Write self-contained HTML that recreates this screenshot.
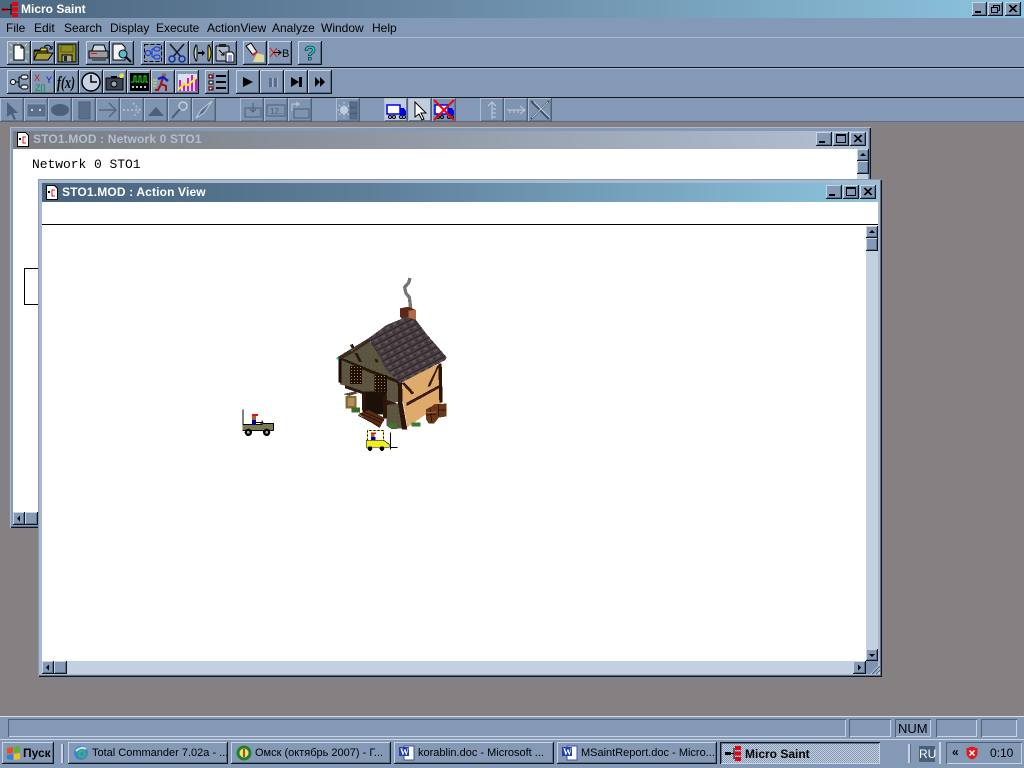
<!DOCTYPE html>
<html><head><meta charset="utf-8"><title>Micro Saint</title>
<style>
html,body{margin:0;padding:0;width:1024px;height:768px;overflow:hidden;background:#858183}
body{position:relative;font-family:"Liberation Sans","Noto Sans CJK SC",sans-serif;font-size:12px;color:#000}
div,span,svg.a{position:absolute;box-sizing:border-box}
.t{white-space:nowrap}
.b{width:24px;height:24px;background:#8499b5;box-shadow:inset -1px -1px 0 #10141c,inset 1px 1px 0 #c8d4e4,inset -2px -2px 0 #5b6f8b}
.d{width:24px;height:24px;top:98px;background:#7f94b0;box-shadow:inset -1px -1px 0 #4f627c,inset 1px 1px 0 #aebdd0,inset -2px -2px 0 #667a96}
.b svg,.d svg{position:absolute;left:0;top:0}
.c{height:14px;background:#8499b5;box-shadow:inset -1px -1px 0 #10141c,inset 1px 1px 0 #c8d4e4,inset -2px -2px 0 #5b6f8b}
.c svg{position:absolute;left:0;top:0}
.s{background:#8499b5;box-shadow:inset -1px -1px 0 #10141c,inset 1px 1px 0 #c8d4e4,inset -2px -2px 0 #5b6f8b}
.s svg{position:absolute;left:0;top:0}
.m{top:21px;font-size:12px;color:#000}
.p{top:719px;height:18px;box-shadow:inset 1px 1px 0 #4f627c,inset -1px -1px 0 #c8d4e4}
.k{top:742px;height:22px;width:160px;background:#8499b5;box-shadow:inset -1px -1px 0 #10141c,inset 1px 1px 0 #c8d4e4,inset -2px -2px 0 #5b6f8b}
.k b,.k i{font-style:normal;font-weight:normal;position:absolute;left:24px;top:4px;white-space:nowrap;font-size:11px;line-height:14px}
.k svg{position:absolute;left:5px;top:3px}
</style></head><body>

<!-- app title bar -->
<div style="left:0;top:0;width:1024px;height:18px;background:linear-gradient(90deg,#4c6780 0%,#6a8aa6 45%,#8cc4de 100%)"></div>
<svg class="a" style="left:2px;top:1px" width="16" height="16" viewBox="0 0 16 16"><rect x="0" y="7" width="6" height="3" fill="#e8000c"/><rect x="0" y="8" width="6" height="1" fill="#000"/><path d="M6 8.500h3M9 3v11" stroke="#000"/><rect x="10" y="1" width="6" height="4" fill="#e8000c"/><rect x="10" y="6.500" width="6" height="4" fill="#e8000c"/><rect x="10" y="12" width="6" height="4" fill="#e8000c"/></svg>
<div class="t" style="left:21px;top:2px;color:#fff;font-weight:bold;font-size:12px">Micro Saint</div>
<div class="c" style="left:972px;top:2px;width:15px"><svg width="15" height="14"><rect x="3" y="9" width="6" height="2" fill="#000"/></svg></div>
<div class="c" style="left:988px;top:2px;width:15px"><svg width="15" height="14"><path d="M5.500 3.500h6v5h-2M5.500 3.500v2" fill="none" stroke="#000"/><rect x="3.500" y="5.500" width="6" height="5" fill="none" stroke="#000"/><path d="M3 5.500h7M5 3.500h7" stroke="#000"/></svg></div>
<div class="c" style="left:1005px;top:2px;width:16px"><svg width="16" height="14"><path d="M4 3l7 7M5 3l7 7M11 3l-7 7M12 3l-7 7" stroke="#000"/></svg></div>

<!-- menu -->
<div style="left:0;top:18px;width:1024px;height:104px;background:#8499b5"></div>
<div class="m t" style="left:6px">File</div>
<div class="m t" style="left:34px">Edit</div>
<div class="m t" style="left:64px">Search</div>
<div class="m t" style="left:110px">Display</div>
<div class="m t" style="left:156px">Execute</div>
<div class="m t" style="left:207px">ActionView</div>
<div class="m t" style="left:272px">Analyze</div>
<div class="m t" style="left:321px">Window</div>
<div class="m t" style="left:372px">Help</div>

<div style="left:0;top:37px;width:1024px;height:1px;background:#a9b9ce"></div>
<div style="left:0;top:67px;width:1024px;height:1px;background:#10141c"></div>
<div style="left:0;top:68px;width:1024px;height:1px;background:#a9b9ce"></div>
<div style="left:0;top:97px;width:1024px;height:1px;background:#10141c"></div>
<div style="left:0;top:121px;width:1024px;height:1px;background:#5b6f8b"></div>

<!-- toolbar 1 -->
<div class="b" style="left:7px;top:41px"><svg width="24" height="24"><path d="M7 4h7l3 3v12H7z" fill="#fff" stroke="#000"/><path d="M14 4v3h3" fill="none" stroke="#000"/><path d="M3 3l2 2M20 3l-2 2M3 20l2-2M20 21l-2-2M2 11h3M19 11h3M11 1v2" stroke="#f4e83c"/></svg></div>
<div class="b" style="left:31px;top:41px"><svg width="24" height="24"><path d="M3 9h6l1-2h6v3" fill="#e8d448" stroke="#000"/><path d="M3 19V10h14l-1 9z" fill="#8c8428" stroke="#000"/><path d="M3 19l3-7h16l-5 7z" fill="#a89c38" stroke="#000"/><path d="M13 6q3-3 6-1l1 2M21 5v3h-3" fill="none" stroke="#000"/></svg></div>
<div class="b" style="left:55px;top:41px"><svg width="24" height="24"><rect x="3" y="3" width="18" height="18" fill="#8c8a24" stroke="#000"/><rect x="6" y="4" width="12" height="7" fill="#8c8a24" stroke="#5c5a14"/><rect x="7" y="14" width="10" height="7" fill="#a8a890" stroke="#000"/><rect x="9" y="15" width="3" height="5" fill="#222"/></svg></div>
<div class="b" style="left:86px;top:41px"><svg width="24" height="24"><path d="M8 4h10l2 6H6z" fill="#d0d8e0" stroke="#000"/><rect x="3" y="10" width="19" height="7" fill="#9a9aa2" stroke="#000"/><rect x="5" y="12" width="6" height="1" fill="#e81010"/><rect x="6" y="17" width="14" height="3" fill="#555"/></svg></div>
<div class="b" style="left:110px;top:41px"><svg width="24" height="24"><path d="M3 3h9l3 3v13H3z" fill="#f2f4f8" stroke="#000"/><circle cx="13" cy="13" r="4" fill="#5cb8d0" stroke="#000"/><path d="M16 16l5 5" stroke="#000" stroke-width="2"/></svg></div>
<div class="b" style="left:141px;top:41px"><svg width="24" height="24"><rect x="3.500" y="3.500" width="17" height="17" fill="none" stroke="#000" stroke-dasharray="4 2"/><circle cx="7" cy="12" r="2.500" fill="none" stroke="#1030e0"/><rect x="13" y="6" width="6" height="4" rx="2" fill="none" stroke="#1030e0"/><rect x="13" y="14" width="6" height="4" rx="2" fill="none" stroke="#1030e0"/><path d="M9 12h2M11 8v8M11 8h2M11 16h2" stroke="#1030e0"/></svg></div>
<div class="b" style="left:165px;top:41px"><svg width="24" height="24"><path d="M5 3l11 13M19 3L8 16" stroke="#10182c" stroke-width="1.500"/><circle cx="7" cy="18" r="3" fill="none" stroke="#1030a0" stroke-width="1.500"/><circle cx="17" cy="18" r="3" fill="none" stroke="#1030a0" stroke-width="1.500"/></svg></div>
<div class="b" style="left:189px;top:41px"><svg width="24" height="24"><path d="M7 4q-4 8 0 16l1-1V5z" fill="#d8d8c0" stroke="#000"/><path d="M20 4q4 8 0 16l-1-1V5z" fill="#e8d040" stroke="#000"/><path d="M9 12h5" stroke="#000" stroke-width="2"/><path d="M13 9l3 3-3 3z"/></svg></div>
<div class="b" style="left:213px;top:41px"><svg width="24" height="24"><rect x="3" y="5" width="13" height="15" rx="1" fill="#aab6c6" stroke="#000"/><rect x="6" y="3" width="7" height="3" fill="#222"/><path d="M6 9l5 5M11 11v3H8" stroke="#000" fill="none"/><path d="M13 11h6l2 2v8h-8z" fill="#fff" stroke="#000"/><path d="M15 15h4M15 17h4M15 19h4" stroke="#1030e0"/></svg></div>
<div class="b" style="left:243px;top:41px"><svg width="24" height="24"><path d="M3 5l5-3 6 9-4 3z" fill="#e8e8e8" stroke="#000"/><path d="M9 13l5-3 1 2-5 3z" fill="#d82020"/><path d="M14 12l7 2v7H10z" fill="#e8e090" opacity=".9"/></svg></div>
<div class="b" style="left:268px;top:41px"><svg width="24" height="24"><path d="M2 7l7 9M9 7l-7 9" stroke="#e81010"/><path d="M5 11.500h7" stroke="#000"/><path d="M10 9l3 2.500-3 2.500" fill="none" stroke="#000"/><text x="14" y="16" font-family="Liberation Sans" font-size="11" fill="#000">B</text></svg></div>
<div class="b" style="left:298px;top:41px"><svg width="24" height="24"><text x="6" y="19" font-family="Liberation Sans" font-weight="bold" font-size="20" fill="#20c8c8" stroke="#000" stroke-width=".5">?</text></svg></div>

<!-- toolbar 2 -->
<div class="b" style="left:7px;top:70px"><svg width="24" height="24"><circle cx="6" cy="12" r="2.500" fill="#e8ecf2" stroke="#000"/><rect x="14" y="5" width="7" height="4" rx="2" fill="#e8ecf2" stroke="#000"/><rect x="14" y="15" width="7" height="4" rx="2" fill="#e8ecf2" stroke="#000"/><path d="M9 12h3M12 7v10M12 7h2M12 17h2" stroke="#000"/></svg></div>
<div class="b" style="left:31px;top:70px"><svg width="24" height="24"><text x="3" y="11" font-family="Liberation Sans" font-size="9" fill="#e01010">X</text><text x="15" y="13" font-family="Liberation Sans" font-size="9" fill="#1010d0">Y</text><text x="4" y="21" font-family="Liberation Sans" font-size="9" fill="#109040">Z[]</text></svg></div>
<div class="b" style="left:55px;top:70px"><svg width="24" height="24"><text x="2" y="18" font-family="Liberation Serif" font-style="italic" font-weight="bold" font-size="17" textLength="18" lengthAdjust="spacingAndGlyphs" fill="#000">f(x)</text></svg></div>
<div class="b" style="left:79px;top:70px"><svg width="24" height="24"><circle cx="12" cy="12" r="9" fill="#c8d4e4" stroke="#000" stroke-width="1.500"/><path d="M12 5v7h6" fill="none" stroke="#000" stroke-width="1.500"/></svg></div>
<div class="b" style="left:103px;top:70px"><svg width="24" height="24"><rect x="3" y="8" width="17" height="12" fill="#3c4450" stroke="#000"/><rect x="8" y="6" width="6" height="2" fill="#000"/><circle cx="11" cy="14" r="3" fill="#9aa6b8" stroke="#000"/><path d="M16 5l3-2 2 2-1 3h-3z" fill="#f0e040"/></svg></div>
<div class="b" style="left:127px;top:70px"><svg width="24" height="24"><rect x="3" y="3" width="19" height="18" fill="#000"/><path d="M4 12h3V6h2v6h3V6h2v6h3V6h2v6h2" fill="none" stroke="#20e020"/><path d="M5 17h2M9 17h2M13 17h2M17 17h2" stroke="#c0c0c0" stroke-width="2"/></svg></div>
<div class="b" style="left:151px;top:70px"><svg width="24" height="24"><circle cx="13" cy="5" r="2" fill="#a06040"/><path d="M12 7l-2 7 5 2v5M10 14l-3 6-3 0" fill="none" stroke="#a01010" stroke-width="2"/><path d="M7 9l5-2 5 4" fill="none" stroke="#1020d0" stroke-width="2.500"/><path d="M2 10h4M2 13h4M2 16h3" stroke="#e8e040"/></svg></div>
<div class="b" style="left:175px;top:70px"><svg width="24" height="24"><rect x="3" y="4" width="19" height="17" fill="#d8e0ea"/><path d="M5 10v11M9 13v8M13 8v13M17 5v16M21 9v12" stroke="#e010c0" stroke-width="2"/><path d="M3 20l6-6 4 1 8-7" fill="none" stroke="#f0f020" stroke-width="2"/></svg></div>
<div class="b" style="left:205px;top:70px"><svg width="24" height="24"><rect x="4" y="5" width="4" height="3" fill="#fff" stroke="#000"/><rect x="4" y="11" width="4" height="3" fill="#fff" stroke="#000"/><rect x="4" y="17" width="4" height="3" fill="#fff" stroke="#000"/><path d="M3 6l3 2 3-5M3 18l3 2 3-5" fill="none" stroke="#e81010"/><rect x="11" y="5" width="10" height="2" /><rect x="11" y="11" width="10" height="2"/><rect x="11" y="17" width="10" height="2"/></svg></div>
<div class="b" style="left:236px;top:70px"><svg width="24" height="24"><path d="M7 7l10 5-10 5z"/></svg></div>
<div class="b" style="left:260px;top:70px"><svg width="24" height="24"><rect x="9" y="8" width="3" height="9" fill="#5b6f8b"/><rect x="14" y="8" width="3" height="9" fill="#5b6f8b"/><path d="M12.500 8v9M17.500 8v9" stroke="#a8b8cc"/></svg></div>
<div class="b" style="left:284px;top:70px"><svg width="24" height="24"><path d="M7 7l8 5-8 5z"/><rect x="15" y="7" width="3" height="10"/></svg></div>
<div class="b" style="left:308px;top:70px"><svg width="24" height="24"><path d="M7 7l5 5-5 5z"/><path d="M12 7l5 5-5 5z"/></svg></div>

<!-- toolbar 3 -->
<div class="d" style="left:0"><svg width="24" height="24"><path d="M7 4v15l4-3 3 6 2-1-3-6h5z" fill="#4c607c"/></svg></div>
<div class="d" style="left:24px"><svg width="24" height="24"><rect x="3" y="6" width="19" height="13" fill="#5b6f8b" stroke="#a8b8cc" stroke-opacity=".5"/><rect x="7" y="11" width="2" height="2" fill="#c8d4e4"/><rect x="15" y="11" width="2" height="2" fill="#c8d4e4"/></svg></div>
<div class="d" style="left:48px"><svg width="24" height="24"><ellipse cx="12" cy="12" rx="9" ry="6" fill="#4c607c"/></svg></div>
<div class="d" style="left:72px"><svg width="24" height="24"><rect x="7" y="4" width="11" height="17" fill="#5b6f8b" stroke="#4c607c"/></svg></div>
<div class="d" style="left:96px"><svg width="24" height="24"><path d="M3 12h17M13 5l7 7-7 7" fill="none" stroke="#55687f" stroke-width="1.500"/></svg></div>
<div class="d" style="left:120px"><svg width="24" height="24"><path d="M3 12h17M13 5l7 7-7 7" fill="none" stroke="#a8b8cc" stroke-dasharray="2 2" stroke-width="2"/></svg></div>
<div class="d" style="left:144px"><svg width="24" height="24"><path d="M4 18l8-9 8 9z" fill="#4c607c"/></svg></div>
<div class="d" style="left:168px"><svg width="24" height="24"><circle cx="15" cy="8" r="4" fill="none" stroke="#c0cddd" stroke-width="1.500"/><path d="M12 11l-8 9" stroke="#4c607c" stroke-width="2"/></svg></div>
<div class="d" style="left:192px"><svg width="24" height="24"><path d="M20 3L9 12l-5 8 8-5z" fill="#5b6f8b" stroke="#c0cddd"/></svg></div>
<div class="d" style="left:240px"><svg width="24" height="24"><rect x="5" y="10" width="16" height="9" fill="none" stroke="#4c607c"/><path d="M13 5v8M10 11l3 3 3-3" fill="none" stroke="#4c607c"/></svg></div>
<div class="d" style="left:264px"><svg width="24" height="24"><rect x="3" y="7" width="18" height="11" fill="none" stroke="#4c607c"/><text x="6" y="16" font-family="Liberation Sans" font-size="8" fill="#4c607c">12..</text></svg></div>
<div class="d" style="left:288px"><svg width="24" height="24"><rect x="6" y="11" width="15" height="9" fill="none" stroke="#4c607c"/><path d="M4 13V6h6M8 4l3 2-3 2" fill="none" stroke="#c0cddd"/></svg></div>
<div class="d" style="left:336px"><svg width="24" height="24"><circle cx="8" cy="12" r="4" fill="#c0cddd"/><path d="M8 4v16M1 12h13M3 7l10 10M13 7L3 17" stroke="#c0cddd" stroke-dasharray="2 1"/><rect x="14" y="4" width="7" height="5" fill="#5b6f8b" stroke="#4c607c"/><rect x="14" y="10" width="7" height="5" fill="#5b6f8b" stroke="#4c607c"/><rect x="14" y="16" width="7" height="5" fill="#5b6f8b" stroke="#4c607c"/></svg></div>
<div class="d" style="left:384px;background:#c0cddd"><svg width="24" height="24"><rect x="3" y="7" width="13" height="9" fill="#fff" stroke="#0000f0" stroke-width="1.500"/><path d="M16 10h4l2 3v4h-6z" fill="#0000f0"/><circle cx="6" cy="19" r="1.500" fill="none" stroke="#000"/><circle cx="10" cy="19" r="1.500" fill="none" stroke="#000"/><circle cx="17" cy="19" r="1.500" fill="none" stroke="#000"/><circle cx="20" cy="19" r="1.500" fill="none" stroke="#000"/></svg></div>
<div class="d" style="left:408px;background:#c0cddd"><svg width="24" height="24"><path d="M7 4v15l4-3 3 6 2-1-3-6h5z" fill="#fff" stroke="#000"/></svg></div>
<div class="d" style="left:432px"><svg width="24" height="24"><rect x="3" y="7" width="13" height="9" fill="#fff" stroke="#0000f0" stroke-width="1.500"/><path d="M16 10h4l2 3v4h-6z" fill="#0000f0"/><circle cx="6" cy="19" r="1.500" fill="none" stroke="#000"/><circle cx="10" cy="19" r="1.500" fill="none" stroke="#000"/><circle cx="17" cy="19" r="1.500" fill="none" stroke="#000"/><circle cx="20" cy="19" r="1.500" fill="none" stroke="#000"/><path d="M2 2l20 20M22 2L2 22" stroke="#f00010" stroke-width="2"/></svg></div>
<div class="d" style="left:480px"><svg width="24" height="24"><path d="M12 4v17M8 8l4-4 4 4M12 11h4M12 15h4M12 19h4" fill="none" stroke="#c0cddd"/></svg></div>
<div class="d" style="left:504px"><svg width="24" height="24"><path d="M3 12h18M16 8l5 4-5 4M6 12v3M10 12v3M14 12v3" fill="none" stroke="#c0cddd"/></svg></div>
<div class="d" style="left:528px"><svg width="24" height="24"><path d="M3 3l18 18M21 3L3 21" stroke="#3c4e66" stroke-width="2"/><path d="M6 4l16 16M4 20L20 4" stroke="#c0cddd"/></svg></div>

<!-- MDI area -->
<div style="left:0;top:122px;width:1024px;height:594px;background:#858183"></div>

<!-- window 1 -->
<div style="left:10px;top:127px;width:861px;height:401px;background:#8499b5;box-shadow:inset 1px 1px 0 #a9b9ce,inset -1px -1px 0 #10141c,inset -2px -2px 0 #5b6f8b"></div>
<div style="left:13px;top:131px;width:855px;height:18px;background:linear-gradient(90deg,#7a7c80 0%,#8d95a0 40%,#b2c0d4 100%)"></div>
<svg class="a" style="left:17px;top:132px" width="12" height="15"><path d="M.5.5h8l3 3v11H.5z" fill="#fff" stroke="#000"/><rect x="2" y="6" width="2" height="2"/><path d="M9 5H6v6h3" fill="none" stroke="#e01010"/></svg>
<div class="t" style="left:33px;top:132px;font-weight:bold;color:#b2bfd0;font-size:12px;letter-spacing:.15px">STO1.MOD : Network 0 STO1</div>
<div class="c" style="left:816px;top:132px;width:16px"><svg width="16" height="14"><rect x="3" y="9" width="6" height="2" fill="#000"/></svg></div>
<div class="c" style="left:833px;top:132px;width:16px"><svg width="16" height="14"><rect x="3.500" y="2.500" width="9" height="8" fill="none" stroke="#000"/><path d="M3 3.500h10" stroke="#000"/></svg></div>
<div class="c" style="left:850px;top:132px;width:16px"><svg width="16" height="14"><path d="M4 3l7 7M5 3l7 7M11 3l-7 7M12 3l-7 7" stroke="#000"/></svg></div>
<div style="left:13px;top:149px;width:844px;height:363px;background:#fff"></div>
<div class="t" style="left:32px;top:157px;font-family:'Liberation Mono',monospace;font-size:13px;letter-spacing:-.05px">Network 0 STO1</div>
<div style="left:857px;top:149px;width:11px;height:363px;background:#c3d0e0"></div>
<div class="s" style="left:857px;top:149px;width:12px;height:12px"><svg width="12" height="12"><path d="M6 4l3 3H3z"/></svg></div>
<div class="s" style="left:857px;top:161px;width:12px;height:13px"></div>
<div style="left:24px;top:268px;width:15px;height:37px;border:1px solid #000;background:#fff"></div>
<div style="left:13px;top:512px;width:855px;height:13px;background:#c3d0e0"></div>
<div class="s" style="left:13px;top:512px;width:12px;height:13px"><svg width="12" height="13"><path d="M4 6.500l3-3v6z"/></svg></div>
<div class="s" style="left:25px;top:512px;width:13px;height:13px"></div>

<!-- window 2 -->
<div style="left:38px;top:179px;width:844px;height:498px;background:#a9b9ce;box-shadow:inset 1px 1px 0 #8499b5,inset -1px -1px 0 #10141c,inset -2px -2px 0 #5b6f8b"></div>
<div style="left:42px;top:183px;width:836px;height:19px;background:linear-gradient(90deg,#47627c 0%,#5f7f9b 40%,#8cc4de 100%)"></div>
<svg class="a" style="left:46px;top:185px" width="12" height="15"><path d="M.5.5h8l3 3v11H.5z" fill="#fff" stroke="#000"/><rect x="2" y="6" width="2" height="2"/><path d="M9 5H6v6h3" fill="none" stroke="#e01010"/></svg>
<div class="t" style="left:62px;top:185px;font-weight:bold;color:#fff;font-size:12px;letter-spacing:.15px">STO1.MOD : Action View</div>
<div class="c" style="left:826px;top:185px;width:16px"><svg width="16" height="14"><rect x="3" y="9" width="6" height="2" fill="#000"/></svg></div>
<div class="c" style="left:843px;top:185px;width:16px"><svg width="16" height="14"><rect x="3.500" y="2.500" width="9" height="8" fill="none" stroke="#000"/><path d="M3 3.500h10" stroke="#000"/></svg></div>
<div class="c" style="left:860px;top:185px;width:16px"><svg width="16" height="14"><path d="M4 3l7 7M5 3l7 7M11 3l-7 7M12 3l-7 7" stroke="#000"/></svg></div>
<div style="left:42px;top:202px;width:836px;height:459px;background:#fff"></div>
<div style="left:42px;top:224px;width:836px;height:1px;background:#000"></div>
<div style="left:866px;top:226px;width:12px;height:423px;background:#c3d0e0"></div>
<div class="s" style="left:866px;top:226px;width:12px;height:12px"><svg width="12" height="12"><path d="M6 4l3 3H3z"/></svg></div>
<div class="s" style="left:866px;top:238px;width:12px;height:13px"></div>
<div class="s" style="left:866px;top:649px;width:12px;height:12px"><svg width="12" height="12"><path d="M6 8l3-3H3z"/></svg></div>
<div style="left:42px;top:661px;width:824px;height:13px;background:#c3d0e0"></div>
<div class="s" style="left:42px;top:661px;width:12px;height:13px"><svg width="12" height="13"><path d="M4 6.500l3-3v6z"/></svg></div>
<div class="s" style="left:54px;top:661px;width:13px;height:13px"></div>
<div class="s" style="left:853px;top:661px;width:13px;height:13px"><svg width="13" height="13"><path d="M8 6.500l-3-3v6z"/></svg></div>
<div style="left:866px;top:661px;width:12px;height:13px;background:#7f94b0"></div>
<svg class="a" style="left:870px;top:664px" width="11" height="11"><path d="M1 10l9-9M5 10l5-5M8 10l2-2" stroke="#d4dde8"/><path d="M2 10l8-8M6 10l4-4" stroke="#4f627c"/></svg>

<!-- Scene: coordinates are 3x, origin 230,270 -->
<svg class="a" style="left:230px;top:270px" width="230" height="190" viewBox="0 0 690 570" shape-rendering="crispEdges">
<defs>
<pattern id="lat" width="9" height="9" patternUnits="userSpaceOnUse"><rect width="9" height="9" fill="#1c1008"/><rect x="3" y="3" width="3" height="3" fill="#c07c24"/></pattern>
<pattern id="roof" width="24" height="18" patternUnits="userSpaceOnUse" patternTransform="rotate(-27)"><rect width="24" height="18" fill="#4a3f42"/><rect width="24" height="3" fill="#2a2224"/><rect x="3" y="6" width="9" height="6" fill="#625658"/><rect x="15" y="9" width="6" height="6" fill="#3c3234"/></pattern>
<pattern id="wall" width="12" height="12" patternUnits="userSpaceOnUse"><rect width="12" height="12" fill="#5c5640"/><rect x="3" y="3" width="3" height="3" fill="#625c44"/><rect x="9" y="9" width="3" height="3" fill="#54503a"/></pattern>
</defs>
<!-- smoke -->
<path d="M540 24l-4 14-12 14 4 18 10 12 4 32" fill="none" stroke="#767676" stroke-width="10"/>
<!-- chimney -->
<path d="M510 115l25-5 22 10 1 42-23 8-25-30z" fill="#5a2818"/>
<path d="M535 122l23-3 1 42-23 5z" fill="#b06a48"/>
<!-- left wall -->
<path d="M330 268l70-43 30-8 75 113v65l-35 8-70-35-50-20-20-5z" fill="url(#wall)"/>
<path d="M326 265h8v74l-8-2z" fill="#1e0c06"/>
<path d="M332 262l90 37 80 30v10l-85-32-85-38zM360 225l8-3 28 53-8 2zM423 218l8-2 14 60-8 2z" fill="#2a1a0c"/>
<!-- windows -->
<rect x="360" y="288" width="36" height="54" fill="url(#lat)"/>
<rect x="433" y="315" width="38" height="54" fill="url(#lat)"/>
<!-- under / door -->
<path d="M345 345l155 55v12l-32-4-68-35-55-18z" fill="#2c1a10"/>
<rect x="398" y="365" width="72" height="68" fill="#1c100a"/>
<path d="M470 405l46-6 14 76-46 2-14-10z" fill="url(#wall)"/>
<path d="M396 365h10v55h-10zM459 375h12v70h-12z" fill="#2c1608"/>
<!-- sign -->
<path d="M340 372l36-8 6 6-24 8z" fill="#5a4830"/>
<rect x="346" y="378" width="34" height="38" fill="#8a6830"/><rect x="354" y="384" width="20" height="24" fill="#b09060"/>
<path d="M365 412h25v15h-25z" fill="#3a6a2c"/>
<!-- porch -->
<path d="M385 432l30-12 50 24-16 30z" fill="#5a2c14"/><path d="M392 430l62 28M402 426l60 26M385 436l62 32" stroke="#2c1408" stroke-width="3"/>
<!-- right wall -->
<path d="M505 335l125-55 5 120-103 72-12-72z" fill="#dfab6c"/>
<path d="M503 330h13l2 70 14 78h-16l-12-78z" fill="#2c1408"/>
<path d="M515 340l8-3 30 32-8 4zM530 398l102-55v9l-102 56zM592 350l30-62 8-6-30 68z" fill="#3a1c0c"/>
<path d="M625 280h10l3 118h-10z" fill="#2a140a"/>
<!-- roof -->
<path d="M415 205l55-40 60-25 28 10 30 40 62 72-4 8-136 70-40-40z" fill="url(#roof)"/>
<path d="M320 263l95-58 4 8-92 56z" fill="#3a2c22"/>
<path d="M330 262l85-55 42 66-80-25z" fill="url(#wall)"/>
<path d="M330 262l30-20 6 4 14-15 36-24 4 8-40 26-6 5-37 20z" fill="#3a2c22"/>
<rect x="320" y="263" width="6" height="6" fill="#30c0d0"/>
<!-- barrels -->
<path d="M588 418l16-8 10-8 36-1v38l-24 4-14 18h-16l-8-14z" fill="#6a3818"/><path d="M600 412l6 48M625 404v36M588 435l30-2M625 420h25" stroke="#2c1408" stroke-width="3"/><path d="M590 428l30-2" stroke="#a06030" stroke-width="3"/>
<!-- grass -->
<path d="M475 460h26v12h-26zM545 458h27v12h-27z" fill="#3a7a2c"/>

<!-- jeep -->
<path d="M37 418h3v62h-3z" fill="#000"/>
<path d="M38 463h59l3-3h30v20l-9 3H46l-9-3z" fill="#7a7a50"/>
<path d="M37 463h60M100 460h30v21M37 481h93" fill="none" stroke="#000" stroke-width="3"/>
<rect x="66" y="432" width="18" height="6" fill="#e01010"/>
<rect x="66" y="438" width="12" height="12" fill="#a06030"/>
<rect x="66" y="450" width="12" height="15" fill="#0000a0"/>
<path d="M78 458h18l-4 3M96 452l3 10" stroke="#000" stroke-width="3" fill="none"/>
<circle cx="55" cy="487" r="11" fill="#000"/><circle cx="55" cy="487" r="4" fill="#bbb"/>
<circle cx="110" cy="487" r="11" fill="#000"/><circle cx="110" cy="487" r="4" fill="#bbb"/>

<!-- forklift -->
<rect x="412" y="481" width="48" height="30" fill="none" stroke="#000" stroke-width="3"/>
<rect x="412" y="481" width="48" height="30" fill="none" stroke="#f0e000" stroke-width="3" stroke-dasharray="6 6"/>
<rect x="423" y="487" width="15" height="5" fill="#e01010"/>
<rect x="423" y="492" width="11" height="9" fill="#a06030"/>
<rect x="423" y="501" width="13" height="14" fill="#0000c0"/>
<path d="M409 511h52l17 12v9H409z" fill="#f0f020" stroke="#000" stroke-width="2"/>
<circle cx="420" cy="536" r="7" fill="#000"/><circle cx="456" cy="536" r="7" fill="#000"/>
<path d="M480 488h3v50h-3zM480 531h23v3h-23z" fill="#000"/>
</svg>

<!-- status bar -->
<div style="left:0;top:716px;width:1024px;height:52px;background:#8499b5"></div>
<div style="left:0;top:716px;width:1024px;height:1px;background:#d4dde8"></div>
<div class="p" style="left:8px;width:838px"></div>
<div class="p" style="left:849px;width:42px"></div>
<div class="p" style="left:895px;width:36px"></div>
<div class="t" style="left:898px;top:721px;font-size:13px">NUM</div>
<div class="p" style="left:936px;width:41px"></div>
<div class="p" style="left:981px;width:36px"></div>
<div style="left:0;top:739px;width:1024px;height:1px;background:#c8d4e4"></div>

<!-- taskbar -->
<div class="k" style="left:2px;width:52px"><svg width="18" height="16" style="left:3px"><path d="M2 3l6-1v6l-6 1z" fill="#e85020"/><path d="M9 2l6-1v6l-6 1z" fill="#60b030"/><path d="M2 10l6-1v6l-6-1z" fill="#3080e0"/><path d="M9 9l6-1v6l-6 1z" fill="#f0c020"/></svg><b style="left:21px;font-size:12px;font-weight:bold;color:#000">Пуск</b></div>
<div style="left:61px;top:744px;width:2px;height:19px;background:#c8d4e4;box-shadow:1px 0 0 #5b6f8b"></div>
<div class="k" style="left:68px"><svg width="16" height="16"><circle cx="8" cy="8" r="7" fill="#3a88d0"/><path d="M3 6q5-5 10-2" stroke="#c0e8f0" stroke-width="2" fill="none"/><circle cx="9" cy="9" r="3" fill="none" stroke="#40c040" stroke-width="1.500"/></svg><i>Total Commander 7.02a - ...</i></div>
<div class="k" style="left:231px"><svg width="16" height="16"><circle cx="8" cy="8" r="7.500" fill="#208030"/><circle cx="8" cy="8" r="4.500" fill="#e8e870"/><path d="M8 4v8" stroke="#c04020" stroke-width="2"/></svg><i>Омск (октябрь 2007) - Г...</i></div>
<div class="k" style="left:394px"><svg width="16" height="16"><path d="M5 1h10v14H5z" fill="#fff" stroke="#4050a0"/><rect x="0" y="2" width="10" height="9" fill="#2040b0"/><text x="1" y="10" font-family="Liberation Serif" font-weight="bold" font-size="9" fill="#fff">W</text></svg><i>korablin.doc - Microsoft ...</i></div>
<div class="k" style="left:557px"><svg width="16" height="16"><path d="M5 1h10v14H5z" fill="#fff" stroke="#4050a0"/><rect x="0" y="2" width="10" height="9" fill="#2040b0"/><text x="1" y="10" font-family="Liberation Serif" font-weight="bold" font-size="9" fill="#fff">W</text></svg><i>MSaintReport.doc - Micro...</i></div>
<div class="k" style="left:720px;background:repeating-conic-gradient(#c4cfdd 0 25%,#8499b5 0 50%) 0 0/2px 2px;box-shadow:inset 1px 1px 0 #10141c,inset -1px -1px 0 #c8d4e4,inset 2px 2px 0 #5b6f8b"><svg width="16" height="16"><rect x="0" y="7" width="6" height="3" fill="#000"/><path d="M6 8.500h3M9 3v11" stroke="#000"/><rect x="10" y="1" width="6" height="4" fill="#e8000c"/><rect x="10" y="6.500" width="6" height="4" fill="#e8000c"/><rect x="10" y="12" width="6" height="4" fill="#e8000c"/></svg><b style="left:25px;top:5px;font-size:12px;font-weight:bold;color:#000">Micro Saint</b></div>
<div style="left:908px;top:744px;width:2px;height:19px;background:#c8d4e4;box-shadow:1px 0 0 #5b6f8b"></div>
<div style="left:919px;top:746px;width:16px;height:16px;background:#47607c;color:#fff;font-size:12px;text-align:center;line-height:16px">RU</div>
<div style="left:939px;top:742px;width:2px;height:22px;background:#c8d4e4"></div>
<div style="left:946px;top:742px;width:76px;height:22px;box-shadow:inset 1px 1px 0 #4f627c,inset -1px -1px 0 #c8d4e4"></div>
<div class="t" style="left:952px;top:745px;font-weight:bold;font-size:12px">«</div>
<svg class="a" style="left:965px;top:745px" width="14" height="16"><path d="M7 1l6 2v5q0 5-6 7-6-2-6-7V3z" fill="#e01820" stroke="#8a98a8"/><path d="M4.500 5.500l5 5M9.500 5.500l-5 5" stroke="#fff" stroke-width="1.500"/></svg>
<div class="t" style="left:990px;top:746px;font-size:12px">0:10</div>
</body></html>
